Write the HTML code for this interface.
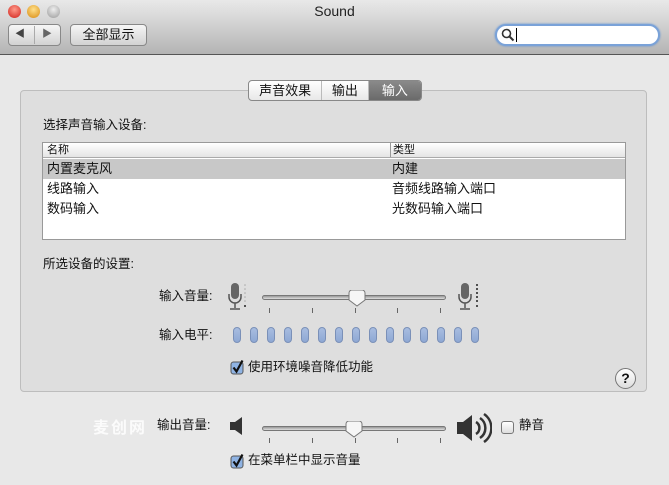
<!DOCTYPE html><html><head><meta charset="utf-8"><style>
*{margin:0;padding:0;box-sizing:border-box}
body{width:669px;height:485px;background:#e8e8e8;font-family:"Liberation Sans","Noto Sans CJK SC",sans-serif;font-size:12px;color:#111;position:relative;overflow:hidden;line-height:1.2}
.a{position:absolute}
.tb{left:0;top:0;width:669px;height:55px;background:linear-gradient(#e9e9e9,#b4b4b4);border-bottom:1px solid #555}
.btn{border:1px solid #888;border-radius:4px;background:linear-gradient(#f6f6f6,#d2d2d2)}
.light{width:13px;height:13px;border-radius:50%;top:5px}
.grp{left:20px;top:90px;width:627px;height:302px;background:#dedede;border:1px solid #bdbdbd;border-radius:4px}
.tab{top:80px;height:21px;border:1px solid #888;border-radius:4px;background:linear-gradient(#fff,#e8e8e8);display:flex;overflow:hidden;left:248px;width:174px}
.tab div{display:flex;align-items:center;justify-content:center;font-size:13px;border-right:1px solid #bbb}
.tbl{left:42px;top:142px;width:584px;height:98px;background:#fff;border:1px solid #999}
.row{position:absolute;left:0;width:582px;height:20px;font-size:13px;line-height:20px}
.row span{position:absolute}
.lbl{font-size:12.5px}
.track{height:5px;border-radius:3px;background:linear-gradient(#999,#ddd);border:1px solid #777}
.thumb{width:18px;height:17px}
.pill{width:8px;height:16px;border-radius:4px;background:linear-gradient(#a8bde0,#8ea8d4);border:1px solid #7a90b8;top:327px}
</style></head><body>
<div class="a tb"></div>
<div class="a light" style="left:8px;background:radial-gradient(circle at 50% 35%,#ff9a8a,#d0201a)"></div>
<div class="a light" style="left:27px;background:radial-gradient(circle at 50% 35%,#ffe08a,#d88a10)"></div>
<div class="a light" style="left:47px;background:radial-gradient(circle at 50% 35%,#eee,#999)"></div>
<div class="a" style="left:0;top:3px;width:669px;text-align:center;font-size:14px;color:#222">Sound</div>
<div class="a btn" style="left:8px;top:24px;width:53px;height:22px"></div>
<div class="a" style="left:34px;top:26px;width:1px;height:18px;background:#aaa"></div>
<div class="a" style="left:15px;top:29px;font-size:10px;color:#444">◀</div>
<div class="a" style="left:42px;top:29px;font-size:10px;color:#666">▶</div>
<div class="a btn" style="left:70px;top:24px;width:77px;height:22px;text-align:center;line-height:20px;font-size:13px">全部显示</div>
<div class="a" style="left:495px;top:24px;width:165px;height:22px;border-radius:11px;background:#fff;border:2px solid #7aa2d8;box-shadow:0 0 2px #5b8fd4"></div>
<svg class="a" style="left:501px;top:28px" width="14" height="14"><circle cx="5.5" cy="5.5" r="4" stroke="#333" stroke-width="1.6" fill="none"/><path d="M8.5 8.5l4 4" stroke="#333" stroke-width="2"/></svg>
<div class="a" style="left:516px;top:28px;width:1px;height:14px;background:#000"></div>
<div class="a grp"></div>
<div class="a tab"><div style="width:74px">声音效果</div><div style="width:47px">输出</div><div style="width:53px;background:linear-gradient(#8a8a8a,#6a6a6a);color:#fff;border:0">输入</div></div>
<div class="a lbl" style="left:43px;top:118px">选择声音输入设备:</div>
<div class="a tbl">
<div class="row" style="top:0;height:15px;line-height:14px;font-size:11px;background:linear-gradient(#fff,#e4e4e4);border-bottom:1px solid #aaa"><span style="left:4px">名称</span><span style="left:347px;border-left:1px solid #999;padding-left:2px">类型</span></div>
<div class="row" style="top:16px;background:#c8c8c8"><span style="left:4px">内置麦克风</span><span style="left:349px">内建</span></div>
<div class="row" style="top:36px"><span style="left:4px">线路输入</span><span style="left:349px">音频线路输入端口</span></div>
<div class="row" style="top:56px"><span style="left:4px">数码输入</span><span style="left:349px">光数码输入端口</span></div>
</div>
<div class="a lbl" style="left:43px;top:257px">所选设备的设置:</div>
<div class="a lbl" style="left:159px;top:289px">输入音量:</div>
<svg class="a" style="left:228px;top:282px" width="20" height="30"><rect x="3" y="1" width="8" height="16" rx="4" fill="#666"/><path d="M1 12v3a6 6 0 0 0 12 0v-3M7 21v5M2 27h10" stroke="#555" stroke-width="1.5" fill="none"/><g fill="#aaa"><circle cx="17" cy="3" r=".8"/><circle cx="17" cy="7" r=".8"/><circle cx="17" cy="11" r=".8"/><circle cx="17" cy="15" r=".8"/><circle cx="17" cy="19" r=".8"/></g><circle cx="17" cy="24" r="1" fill="#222"/></svg>
<div class="a track" style="left:262px;top:295px;width:184px"></div>
<svg class="a thumb" style="left:348px;top:290px"><path d="M1 3a3 3 0 0 1 3-3h10a3 3 0 0 1 3 3v7l-8 6-8-6z" fill="#f6f6f6" stroke="#777"/></svg>
<div class="a" style="left:269px;top:308px;width:172px;height:5px;display:flex;justify-content:space-between"><i style="width:1px;background:#666"></i><i style="width:1px;background:#666"></i><i style="width:1px;background:#666"></i><i style="width:1px;background:#666"></i><i style="width:1px;background:#666"></i></div>
<svg class="a" style="left:458px;top:282px" width="24" height="30"><rect x="3" y="1" width="8" height="16" rx="4" fill="#666"/><path d="M1 12v3a6 6 0 0 0 12 0v-3M7 21v5M2 27h10" stroke="#555" stroke-width="1.5" fill="none"/><g fill="#222"><circle cx="19" cy="3" r="1"/><circle cx="19" cy="7" r="1"/><circle cx="19" cy="11" r="1"/><circle cx="19" cy="15" r="1"/><circle cx="19" cy="19" r="1"/><circle cx="19" cy="24" r="1"/></g></svg>
<div class="a lbl" style="left:159px;top:328px">输入电平:</div>
<div class="a pill" style="left:233px"></div><div class="a pill" style="left:250px"></div><div class="a pill" style="left:267px"></div><div class="a pill" style="left:284px"></div><div class="a pill" style="left:301px"></div><div class="a pill" style="left:318px"></div><div class="a pill" style="left:335px"></div><div class="a pill" style="left:352px"></div><div class="a pill" style="left:369px"></div><div class="a pill" style="left:386px"></div><div class="a pill" style="left:403px"></div><div class="a pill" style="left:420px"></div><div class="a pill" style="left:437px"></div><div class="a pill" style="left:454px"></div><div class="a pill" style="left:471px"></div>
<svg class="a" style="left:230px;top:359px" width="16" height="16"><rect x="1" y="3" width="12" height="12" rx="2.5" fill="#8fb3e3" stroke="#555"/><path d="M3.5 8.5l3 4 6-11" stroke="#111" stroke-width="2.2" fill="none"/></svg>
<div class="a lbl" style="left:248px;top:360px">使用环境噪音降低功能</div>
<div class="a" style="left:615px;top:368px;width:21px;height:21px;border-radius:50%;border:1px solid #777;background:linear-gradient(#fff,#ddd);text-align:center;line-height:19px;font-weight:bold;font-size:14px">?</div>
<div class="a" style="left:93px;top:419px;color:#fff;opacity:.85;font-size:16px;font-weight:bold;letter-spacing:2px">麦创网</div>
<div class="a lbl" style="left:157px;top:418px">输出音量:</div>
<svg class="a" style="left:229px;top:416px" width="16" height="20"><path d="M1 6h5l7-5v18l-7-5H1z" fill="#333"/></svg>
<div class="a track" style="left:262px;top:426px;width:184px"></div>
<svg class="a thumb" style="left:345px;top:421px"><path d="M1 3a3 3 0 0 1 3-3h10a3 3 0 0 1 3 3v7l-8 6-8-6z" fill="#f6f6f6" stroke="#777"/></svg>
<div class="a" style="left:269px;top:438px;width:172px;height:5px;display:flex;justify-content:space-between"><i style="width:1px;background:#666"></i><i style="width:1px;background:#666"></i><i style="width:1px;background:#666"></i><i style="width:1px;background:#666"></i><i style="width:1px;background:#666"></i></div>
<svg class="a" style="left:456px;top:412px" width="36" height="32"><path d="M1 10h6l9-7v26l-9-7H1z" fill="#333"/><path d="M20 10a7 7 0 0 1 0 12M24 6a12 12 0 0 1 0 20M28 2a17 17 0 0 1 0 28" stroke="#333" stroke-width="2.5" fill="none"/></svg>
<div class="a" style="left:501px;top:421px;width:13px;height:13px;border:1px solid #777;border-radius:3px;background:linear-gradient(#fff,#ddd)"></div>
<div class="a lbl" style="left:519px;top:418px">静音</div>
<svg class="a" style="left:230px;top:453px" width="16" height="16"><rect x="1" y="3" width="12" height="12" rx="2.5" fill="#8fb3e3" stroke="#555"/><path d="M3.5 8.5l3 4 6-11" stroke="#111" stroke-width="2.2" fill="none"/></svg>
<div class="a lbl" style="left:248px;top:453px">在菜单栏中显示音量</div>
</body></html>
